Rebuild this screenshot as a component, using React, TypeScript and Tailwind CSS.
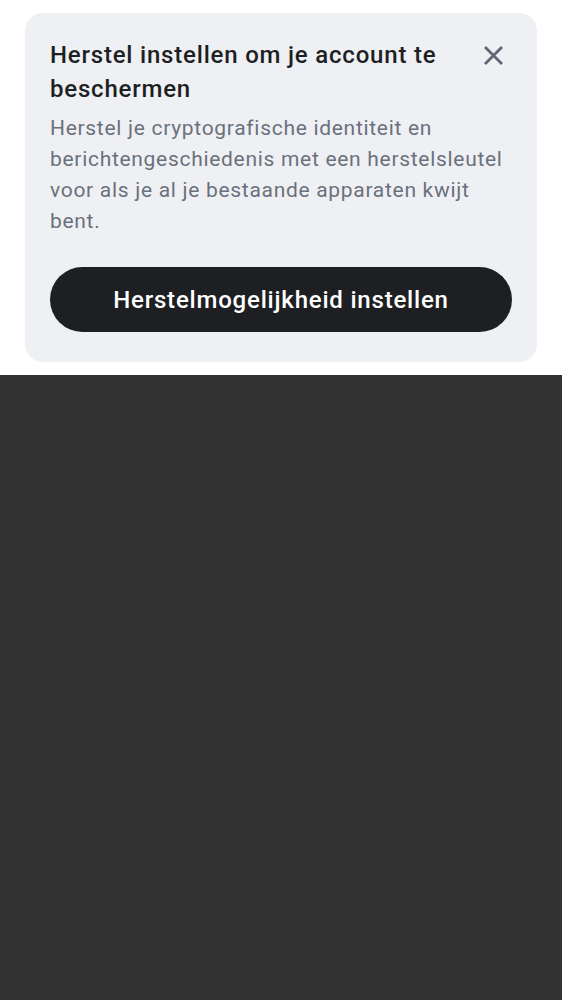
export default function App() {
  return (
    <div className="w-[562px] h-[1000px] bg-[#323232] font-['Roboto',sans-serif]">
      <div className="bg-white px-[25px] pt-[13px] pb-[13px]">
        <div className="bg-[#eff0f4] rounded-[18px] pl-[25px] pr-[25px] pt-[25px] pb-[30px]">
          <div className="flex items-start justify-between">
            <h2 className="text-[24px] leading-[34px] font-medium tracking-[0.8px] text-[#1e1f23] pr-4">
              Herstel instellen om je account te beschermen
            </h2>
            <button className="mt-[8px] mr-[9px] text-[#5d6672] shrink-0">
              <svg width="19" height="19" viewBox="0 0 19 19" fill="none" stroke="currentColor" strokeWidth="2.8" strokeLinecap="butt">
                <path d="M1 1L18 18M18 1L1 18" />
              </svg>
            </button>
          </div>
          <p className="mt-[7px] text-[21px] leading-[31px] tracking-[0.7px] text-[#6a717c]">
            Herstel je cryptografische identiteit en berichtengeschiedenis met een herstelsleutel voor als je al je bestaande apparaten kwijt bent.
          </p>
          <button className="mt-[30px] w-full h-[65px] rounded-full bg-[#1e1f23] text-white text-[24px] font-medium tracking-[0.8px]">
            Herstelmogelijkheid instellen
          </button>
        </div>
      </div>
    </div>
  );
}
